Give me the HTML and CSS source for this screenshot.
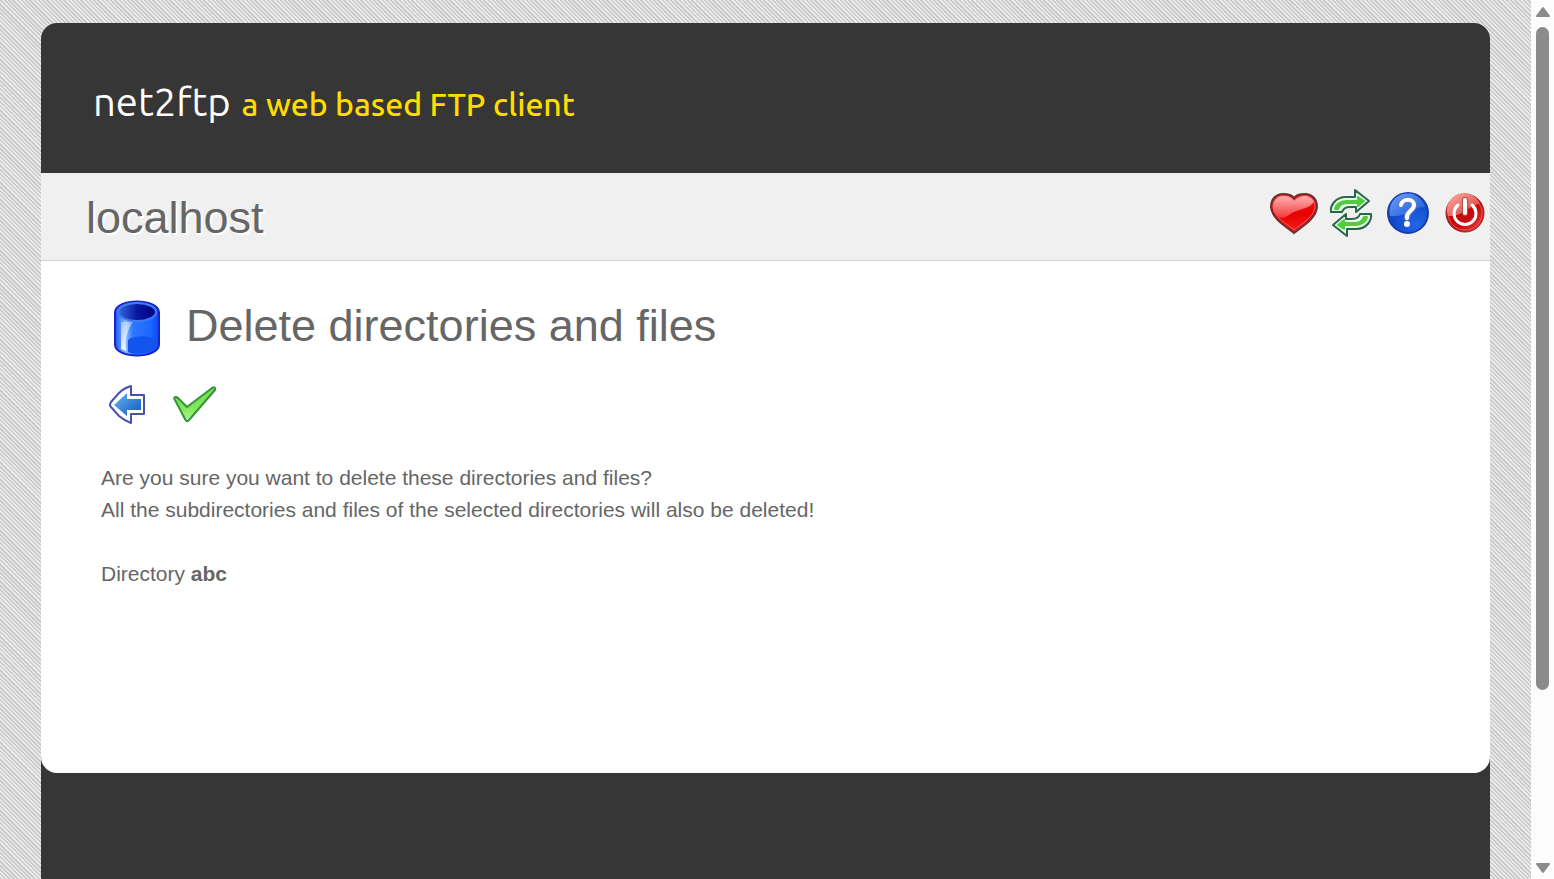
FILE: index.html
```html
<!DOCTYPE html>
<html lang="en">
<head>
<meta charset="utf-8">
<title>net2ftp - a web based FTP client</title>
<link rel="stylesheet" href="styles.css">
</head>
<body>
<div class="viewport">
  <div class="page">
    <header class="header">
      <a class="logo" href="#"><span class="logo-name">net2ftp</span><span class="logo-tag">a web based FTP client</span></a>
    </header>
    <div class="main">
      <div class="bar">
        <h1 class="bar-title">localhost</h1>
        <nav class="tools">
          <button class="tool" type="button" aria-label="Bookmark">
            <svg width="50" height="50" viewBox="0 0 50 50">
              <defs>
                <linearGradient id="heart" x1="0" y1="0" x2="0" y2="1"><stop offset="0" stop-color="#f02020"/><stop offset=".5" stop-color="#e80000"/><stop offset="1" stop-color="#f02020"/></linearGradient>
                <linearGradient id="heartShine" x1="0" y1="0" x2="0" y2="1"><stop offset="0" stop-color="#ffb0b0"/><stop offset="1" stop-color="#f43a3a"/></linearGradient>
              </defs>
              <path d="M25 44 C20 39 3 31 2 18 C2 10 7 5 14 5 C19 5 23 6 25 9 C27 6 31 5 36 5 C43 5 48 10 48 18 C47 31 30 39 25 44Z" fill="url(#heart)" stroke="#6d3030" stroke-width="2"/>
              <path d="M25 41 C20 36 5 29 4 18 C4 11 8 7 14 7 C19 7 23 9 25 12 C27 9 31 7 36 7 C42 7 46 11 46 18 C45 29 30 36 25 41Z" fill="none" stroke="#ff5656" stroke-width="1"/>
              <path d="M9 28 C5 24 4 21 4 17 C5 10 9 7 15 7 C20 7 23 9 25 12 C28 9 32 7 37 7 C41 8 44 10 45 13 C40 20 32 19 23 24 C17 28 14 30 9 28Z" fill="url(#heartShine)"/>
            </svg>
          </button>
          <button class="tool" type="button" aria-label="Refresh">
            <svg width="50" height="50" viewBox="0 0 50 50">
              <g id="turn" stroke-linejoin="round">
                <path d="M5 23 C4 17 9 8 20 8 H29 V1 L43 12 L30 23 V18 H24 C19 18 17 20 16 23Z" fill="#e6ffe4" stroke="#28664a" stroke-width="2"/>
                <path d="M9 20 C10 15 15 12 21 12 H32 V8 L38 12 L32 17 V14 H22 C16 14 14 16 12 20Z" fill="#43d62b" stroke="#56c844" stroke-width="2"/>
              </g>
              <use href="#turn" transform="rotate(180 25 24)"/>
            </svg>
          </button>
          <button class="tool" type="button" aria-label="Help">
            <svg width="50" height="50" viewBox="0 0 50 50">
              <defs><radialGradient id="help" cx=".7" cy=".8" r=".8"><stop offset="0" stop-color="#2166ea"/><stop offset="1" stop-color="#0b3ebd"/></radialGradient>
              <linearGradient id="helpShine" x1="0" y1="0" x2="1" y2="1"><stop offset="0" stop-color="#6ea2ff"/><stop offset="1" stop-color="#1856d2"/></linearGradient></defs>
              <circle cx="25" cy="24" r="20" fill="url(#help)" stroke="#173faa" stroke-width="2"/>
              <path d="M7 27 A18 18 0 0 1 42 18 C29 18 23 29 7 27Z" fill="url(#helpShine)"/>
              <path d="M18 16 C19 9 31 9 31 16 C31 22 23 22 24 29" fill="none" stroke="#5d7fc4" stroke-width="6" stroke-linecap="round"/>
              <path d="M18 16 C19 9 31 9 31 16 C31 22 23 22 24 29" fill="none" stroke="#fff" stroke-width="4" stroke-linecap="round"/>
              <circle cx="24" cy="35" r="3" fill="#fff"/>
            </svg>
          </button>
          <button class="tool" type="button" aria-label="Logout">
            <svg width="50" height="50" viewBox="0 0 50 50">
              <defs><linearGradient id="power" x1="0" y1="0" x2="1" y2="1"><stop offset="0" stop-color="#c00808"/><stop offset=".6" stop-color="#c60c0c"/><stop offset="1" stop-color="#ef4545"/></linearGradient>
              <linearGradient id="powerShine" x1="0" y1="0" x2="1" y2="1"><stop offset="0" stop-color="#ffb0a8"/><stop offset="1" stop-color="#d73030"/></linearGradient></defs>
              <circle cx="25" cy="24" r="19" fill="url(#power)" stroke="#92201e" stroke-width="1"/>
              <circle cx="25" cy="24" r="17" fill="none" stroke="#e45b50" stroke-width="1"/>
              <path d="M8 27 A17 17 0 0 1 40 15 C29 16 23 28 8 27Z" fill="url(#powerShine)"/>
              <path d="M18 16 A11 11 0 1 0 32 16" fill="none" stroke="#fff" stroke-width="3" stroke-linecap="round"/>
              <path d="M25 11 V24" stroke="#b94b47" stroke-width="6" stroke-linecap="round"/>
              <path d="M25 11 V24" stroke="#fff" stroke-width="4" stroke-linecap="round"/>
            </svg>
          </button>
        </nav>
      </div>
      <main class="content">
        <div class="heading">
          <svg width="60" height="60" viewBox="0 0 60 60" aria-hidden="true">
            <defs>
              <linearGradient id="can"><stop offset="0" stop-color="#1455f5"/><stop offset=".25" stop-color="#8fbcff"/><stop offset=".4" stop-color="#2c78ff"/><stop offset=".8" stop-color="#1c68ff"/><stop offset="1" stop-color="#0748f5"/></linearGradient>
              <linearGradient id="canHole"><stop offset="0" stop-color="#356be0"/><stop offset=".5" stop-color="#0717a0"/><stop offset="1" stop-color="#020080"/></linearGradient>
              <linearGradient id="canShine" x1="0" y1="0" x2="0" y2="1"><stop offset="0" stop-color="#fff" stop-opacity=".4"/><stop offset="1" stop-color="#fff" stop-opacity=".9"/></linearGradient>
            </defs>
            <path d="M8 14 C9 0 51 0 52 14 V47 C51 61 9 61 8 47Z" fill="url(#can)" stroke="#1723cf" stroke-width="2"/>
            <path d="M14 24 L26 24 C20 31 18 42 19 53 L14 51Z" fill="url(#canShine)"/>
            <path d="M21 42 C28 37 43 37 50 43 V48 C47 56 28 57 21 54Z" fill="#1254ed"/>
            <ellipse cx="30" cy="14" rx="19" ry="9" fill="url(#canHole)" stroke="#3f7df5" stroke-width="2"/>
          </svg>
          <h2 class="heading-text">Delete directories and files</h2>
        </div>
        <form class="form">
          <div class="actions">
            <button class="action" type="button" aria-label="Back">
              <svg width="50" height="50" viewBox="-5 0 50 50">
                <defs><linearGradient id="back" x1="0" y1="0" x2="1" y2="1"><stop offset="0" stop-color="#64b7f4"/><stop offset="1" stop-color="#1256bd"/></linearGradient></defs>
                <path d="M25 6 Q18 8 13 13 L5 22 Q3 25 5 27 L13 36 Q19 41 25 43 V34 H38 V15 H25Z" fill="#fff" stroke="#4453ad" stroke-width="2" stroke-linejoin="round"/>
                <path d="M21 13 L8 25 L21 36 V30 H35 V19 H21Z" fill="url(#back)"/>
              </svg>
            </button>
            <button class="action" type="submit" aria-label="Submit">
              <svg width="50" height="50" viewBox="-1 0 50 50">
                <defs><linearGradient id="check" x1="0" y1="0" x2="0" y2="1"><stop offset="0" stop-color="#72df43"/><stop offset=".6" stop-color="#80e758"/><stop offset="1" stop-color="#b7f691"/></linearGradient></defs>
                <path d="M5 20 Q3 17 6 17 L8 18 L17 27 L42 8 Q46 6 45 10 L19 40 Q17 43 15 39Z" fill="url(#check)" stroke="#369341" stroke-width="2" stroke-linejoin="round"/>
              </svg>
            </button>
          </div>
          <p class="text">Are you sure you want to delete these directories and files?<br>All the subdirectories and files of the selected directories will also be deleted!</p>
          <p class="text">Directory <b>abc</b></p>
        </form>
      </main>
    </div>
    <footer class="footer"></footer>
  </div>
  <div class="scrollbar" aria-hidden="true">
    <svg width="23" height="27" viewBox="0 0 23 27"><path d="M12 8 L18 16 H6Z" fill="#8b8b8b" stroke="#8b8b8b" stroke-width="2" stroke-linejoin="round"/></svg>
    <div class="track"><div class="thumb"></div></div>
    <svg width="23" height="23" viewBox="0 0 23 23"><path d="M6 8 H18 L12 16Z" fill="#8b8b8b" stroke="#8b8b8b" stroke-width="2" stroke-linejoin="round"/></svg>
  </div>
</div>
</body>
</html>
```
FILE: styles.css
```css
* { box-sizing: border-box; }

body {
  margin: 0;
  font-family: "Liberation Sans", Arial, sans-serif;
  font-size: 21px;
  line-height: 32px;
  color: #666;
  background: repeating-linear-gradient(45deg, #c8c8c8 0 1px, #ececec 2px 3px);
}

.viewport {
  display: flex;
  height: 100vh;
  overflow: hidden;
}

.page {
  flex: 1;
  display: flex;
  flex-direction: column;
  margin: 23px 41px 0;
  border-radius: 16px 16px 0 0;
  background: #363636;
}

.header { padding: 51px 52px 41px; }

.logo {
  display: flex;
  align-items: baseline;
  gap: 11px;
  color: #fff;
  font-family: Ubuntu, "Noto Sans", sans-serif;
  line-height: 56px;
  white-space: nowrap;
  text-decoration: none;
}

.logo-name { font-size: 40px; }

.logo-tag {
  font-size: 32px;
  font-weight: 500;
  color: #fd0;
}

.main {
  min-height: 600px;
  background: #fff;
  border-radius: 0 0 16px 16px;
}

.bar {
  display: flex;
  justify-content: space-between;
  padding: 16px 0 13px 45px;
  background: #f0f0f0;
  border-bottom: 1px solid #d4d4d4;
}

.bar-title, .heading-text {
  margin: 0;
  font-size: 45px;
  font-weight: 400;
  line-height: 56px;
}

.bar-title {
  line-height: 58px;
  text-shadow: 2px 2px 0 #fff;
}

.tools { display: flex; gap: 7px; }

.tool, .action {
  height: 50px;
  padding: 0;
  border: 0;
  background: none;
  cursor: pointer;
}

svg { display: block; }

.content { padding: 37px 60px; }

.heading {
  display: flex;
  gap: 19px;
  padding-left: 6px;
}

.actions { display: flex; gap: 18px; padding-top: 22px; }

.text { margin: 32px 0; }

.footer { flex: 1; }

.scrollbar {
  display: flex;
  flex-direction: column;
  width: 23px;
  background: #fcfcfc;
}

.track { flex: 1; }

.thumb {
  width: 13px;
  height: 80%;
  margin-left: 5px;
  border-radius: 7px;
  background: #8b8b8b;
}
```
